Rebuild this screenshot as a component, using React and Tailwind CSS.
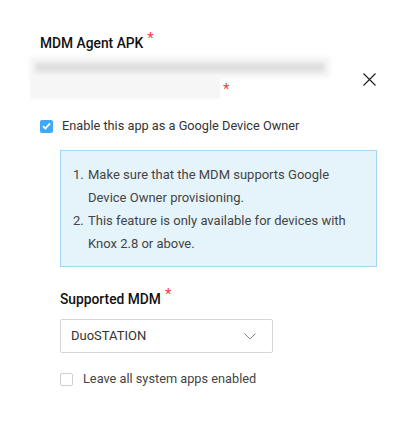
import React from 'react';

const font = { fontFamily: 'Roboto, "Open Sans", Arial, sans-serif' };

export default function App() {
  return (
    <div className="w-[417px] h-[424px] bg-white relative overflow-hidden text-[#333]" style={font}>
      {/* close */}
      <button className="absolute left-[363px] top-[73px] w-[13px] h-[13px]">
        <svg width="13" height="13" viewBox="0 0 13 13">
          <path d="M0.5 0.5 L12.5 12.5 M12.5 0.5 L0.5 12.5" stroke="#222" strokeWidth="1.2" />
        </svg>
      </button>

      <div className="pt-[31px]">
        <div className="pl-[40px] flex items-start">
          <span className="text-[13.8px] font-medium text-[#111] leading-[20px] mt-[2px]">MDM Agent APK</span>
          <span className="text-[#f0403c] text-[15px] leading-[14px] ml-[4px]">*</span>
        </div>

        {/* blurred file name */}
        <div className="mt-[4px] pl-[30px]">
          <div className="w-[300px] h-[20px] bg-[#f3f3f3] flex items-center px-[6px] blur-[2px]">
            <div className="h-[9px] w-full bg-[#dedede]" />
          </div>
          <div className="flex items-start">
            <div className="w-[190px] h-[22px] bg-[#f6f6f6] blur-[1px]" />
            <span className="text-[#f0403c] text-[15px] leading-[14px] ml-[3px] mt-[5px]">*</span>
          </div>
        </div>

        {/* checkbox */}
        <label className="mt-[20px] pl-[40px] flex items-center gap-[9px]">
          <span className="w-[13px] h-[13px] rounded-[2px] bg-[#3fa9f5] flex items-center justify-center">
            <svg width="9" height="8" viewBox="0 0 9 8">
              <path d="M1 4.2 L3.4 6.5 L8 1.3" stroke="#fff" strokeWidth="1.8" fill="none" />
            </svg>
          </span>
          <span className="text-[12.75px] text-[#333] leading-[14px]">Enable this app as a Google Device Owner</span>
        </label>

        {/* info box */}
        <div className="ml-[60px] mt-[17px] w-[317px] h-[117px] bg-[#e5f4fb] border border-[#a3d6f2] pt-[12px] pl-[12px] pr-[12px] text-[13px] leading-[23px] text-[#444]">
          <ol className="list-decimal pl-[14px]">
            <li className="pl-[1px]">Make sure that the MDM supports Google Device Owner provisioning.</li>
            <li className="pl-[1px]">This feature is only available for devices with Knox 2.8 or above.</li>
          </ol>
        </div>

        <div className="pl-[60px] mt-[20px] flex items-start">
          <span className="text-[13.8px] font-medium text-[#111] leading-[20px] mt-[2px]">Supported MDM</span>
          <span className="text-[#f0403c] text-[15px] leading-[14px] ml-[4px]">*</span>
        </div>

        <div className="ml-[60px] mt-[10px] w-[213px] h-[34px] border border-[#d6d6d6] rounded-[2px] flex items-center justify-between pl-[10px] pr-[16px]">
          <span className="text-[13px] text-[#333]">DuoSTATION</span>
          <svg width="12" height="7" viewBox="0 0 12 7">
            <path d="M0.5 0.5 L6 6 L11.5 0.5" stroke="#888" strokeWidth="1" fill="none" />
          </svg>
        </div>

        <label className="mt-[19px] pl-[60px] flex items-center gap-[10px]">
          <span className="w-[13px] h-[13px] rounded-[2px] border border-[#cfcfcf] bg-white" />
          <span className="text-[12.75px] text-[#444] leading-[14px]">Leave all system apps enabled</span>
        </label>
      </div>
    </div>
  );
}
